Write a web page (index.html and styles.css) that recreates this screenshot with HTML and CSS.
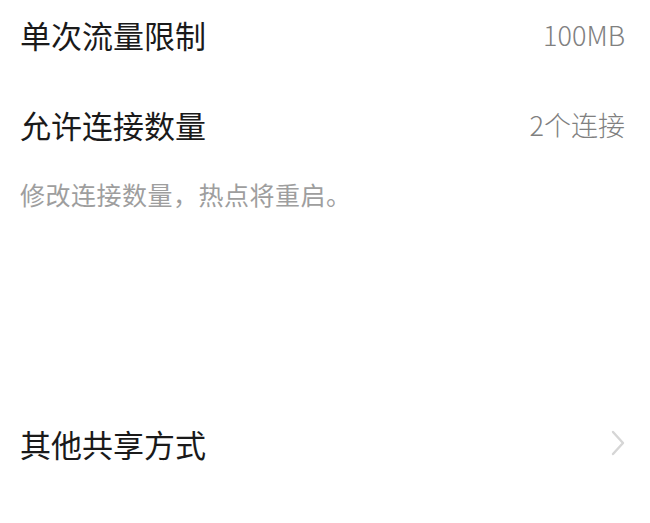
FILE: index.html
```html
<!DOCTYPE html>
<html lang="zh-CN">
    <head>
        <meta charset="utf-8" />
        <meta name="viewport" content="width=device-width, initial-scale=1" />
        <title>个人热点</title>
        <link rel="stylesheet" href="styles.css">
    </head>
    <body>
        <div class="settings">
            <div class="row">
                <span class="row-title">单次流量限制</span>
                <span class="row-value">100MB</span>
            </div>
            <div class="row">
                <span class="row-title">允许连接数量</span>
                <span class="row-value">2个连接</span>
            </div>
            <p class="hint">修改连接数量，热点将重启。</p>
        </div>

        <div class="settings settings-more">
            <div class="row">
                <span class="row-title">其他共享方式</span>
                <svg class="chevron" width="14" height="26" viewBox="0 0 14 26">
                    <path d="M2 2 L12 13 L2 24" fill="none" stroke="#d6d6d6" stroke-width="2.4" stroke-linecap="round" stroke-linejoin="round"/>
                </svg>
            </div>
        </div>
    </body>
</html>
```

FILE: styles.css
```css
body, html {
    margin: 0;
    padding: 0;
    height: 100%;
    overflow: hidden;
    background: #ffffff;
    font-family: "Noto Sans CJK SC", "Noto Sans", sans-serif;
}

.settings {
    margin-top: -11px;
    padding: 0 25px 0 20px;
}

.settings-more {
    margin-top: 190px;
}

.row {
    display: flex;
    align-items: center;
    justify-content: space-between;
    height: 90px;
}

.row-title {
    font-size: 31px;
    color: #1a1a1a;
}

.row-value {
    font-size: 27px;
    font-weight: 300;
    color: #808080;
}

.hint {
    margin: 11px 0 0;
    font-size: 25px;
    line-height: 28px;
    letter-spacing: 0.5px;
    color: #9e9e9e;
}

.chevron {
    display: block;
}
```
